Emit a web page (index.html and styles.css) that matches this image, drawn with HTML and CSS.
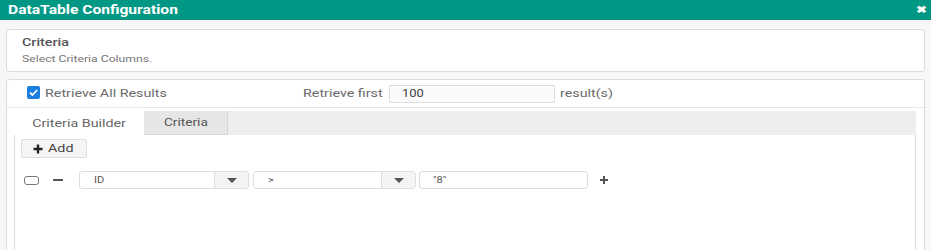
FILE: index.html
```html
<!DOCTYPE html>
<html>
<head>
<meta charset="utf-8">
<link rel="stylesheet" href="styles.css">
</head>
<body>
<div class="dialog">
  <div class="header">
    <span class="t title">DataTable Configuration</span>
    <span class="close">&#10006;</span>
  </div>
  <div class="body">
    <div class="panel info">
      <div class="info-title"><span class="t">Criteria</span></div>
      <div class="info-sub"><span class="t">Select Criteria Columns.</span></div>
    </div>
    <div class="panel main">
      <div class="top-row">
        <label class="chk-label">
          <span class="chk">
            <svg width="13" height="13" viewBox="0 0 13 13"><rect x="0" y="0" width="13" height="13" rx="2" fill="#1a7fe0"/><path d="M3 6.6 L5.4 9 L10.2 4" fill="none" stroke="#fff" stroke-width="1.8"/></svg>
          </span>
          <span class="t">Retrieve All Results</span>
        </label>
        <div class="limit">
          <span class="limit-lbl"><span class="t">Retrieve first</span></span>
          <span class="limit-input"><span class="t">100</span></span>
          <span class="limit-lbl2"><span class="t">result(s)</span></span>
        </div>
      </div>
      <div class="tabs">
        <div class="tab-bar">
          <div class="tab active"><span class="t c">Criteria Builder</span></div>
          <div class="tab other"><span class="t c">Criteria</span></div>
        </div>
        <div class="tab-content">
          <div class="add-btn"><svg width="10" height="10" viewBox="0 0 10 10"><path d="M5 0.5V9.5M0.5 5H9.5" stroke="#222" stroke-width="2.4"/></svg><span class="t">Add</span></div>
          <div class="rule">
            <span class="rule-chk"></span>
            <span class="rule-minus"></span>
            <div class="select s1">
              <span class="sel-text"><span class="t">ID</span></span>
              <span class="sel-btn"><svg width="10" height="5" viewBox="0 0 10 5"><path d="M0 0H10L5 5Z" fill="#555"/></svg></span>
            </div>
            <div class="select s2">
              <span class="sel-text"><span class="t">&gt;</span></span>
              <span class="sel-btn"><svg width="10" height="5" viewBox="0 0 10 5"><path d="M0 0H10L5 5Z" fill="#555"/></svg></span>
            </div>
            <div class="value"><span class="t">"8"</span></div>
            <span class="rule-plus"><svg width="10" height="10" viewBox="0 0 10 10"><path d="M5 1V9M1 5H9" stroke="#555" stroke-width="2"/></svg></span>
          </div>
        </div>
      </div>
    </div>
  </div>
</div>
</body>
</html>
```

FILE: styles.css
```css
* { box-sizing: border-box; }
html, body {
  margin: 0;
  padding: 0;
  background: #f7f7f7;
  font-family: Roboto, "Liberation Sans", Arial, sans-serif;
  overflow: hidden;
  height: 250px;
}
.t {
  display: inline-block;
  transform: scaleX(1.3);
  transform-origin: left center;
  white-space: nowrap;
}
.t.c { transform-origin: center center; }
.header {
  height: 20px;
  background: #009885;
  border-bottom: 1px solid #0f8a79;
  display: flex;
  align-items: center;
  justify-content: space-between;
  padding: 0 6px 0 8px;
}
.title {
  color: #fff;
  font-weight: 700;
  font-size: 12px;
}
.close {
  color: #fff;
  font-size: 10px;
  font-weight: 700;
  transform: scaleX(1.3);
}
.body {
  padding: 9px 6px 0 6px;
  display: flex;
  flex-direction: column;
  gap: 7px;
}
.panel {
  background: #fff;
  border: 1px solid #dcdcdc;
  border-radius: 3px;
}
.info {
  height: 43px;
  padding: 6px 15px;
}
.info-title {
  font-size: 11px;
  font-weight: 500;
  color: #555;
  line-height: 14px;
}
.info-sub {
  margin-top: 3px;
  font-size: 9.4px;
  color: #777;
  line-height: 12px;
}
.main {
  height: 171px;
  border-bottom: none;
  border-radius: 3px 3px 0 0;
}
.top-row {
  height: 28px;
  border-bottom: 1px solid #e8e8e8;
  display: flex;
  align-items: center;
  padding-left: 20px;
}
.chk-label {
  display: flex;
  align-items: center;
  gap: 5px;
  font-size: 11px;
  color: #6a6a6a;
  width: 276px;
}
.chk { display: flex; margin-top: -3px; }
.limit {
  display: flex;
  align-items: center;
  font-size: 11px;
  color: #6a6a6a;
}
.limit-lbl { width: 86px; }
.limit-lbl2 { margin-left: 5px; font-size: 11px; }
.limit-input {
  width: 166px;
  height: 18px;
  border: 1px solid #ddd;
  border-radius: 2px;
  background: #fafafa;
  padding-left: 12px;
  line-height: 16px;
  color: #444;
  font-size: 10px;
}
.tabs {
  margin: 3px 8px 0 7px;
}
.tab-bar {
  height: 24px;
  background: #eee;
  display: flex;
}
.tab {
  font-size: 11px;
  color: #555;
  display: flex;
  align-items: center;
  justify-content: center;
  height: 24px;
}
.tab.active {
  background: #fff;
  width: 130px;
  color: #666;
}
.tab.other {
  width: 84px;
  background: #e6e6e6;
  border: 1px solid #d5d5d5;
  border-top: none;
  border-left: none;
  font-size: 10.5px;
}
.tab-content {
  background: #fff;
  border-left: 1px solid #ddd;
  border-right: 1px solid #ddd;
  height: 120px;
  padding: 4px 6px;
}
.add-btn {
  width: 66px;
  height: 19px;
  background: #f5f5f5;
  border: 1px solid #ddd;
  border-radius: 2px;
  display: flex;
  align-items: center;
  padding-left: 11px;
  gap: 5px;
  font-size: 11px;
  color: #444;
}
.rule {
  margin-top: 13px;
  display: flex;
  align-items: center;
  height: 18px;
}
.rule-chk {
  width: 15px;
  height: 9px;
  border: 1px solid #777;
  border-radius: 3px;
  margin-left: 3px;
}
.rule-minus {
  width: 10px;
  height: 2px;
  background: #555;
  margin-left: 14px;
}
.select {
  display: flex;
  height: 18px;
  border: 1px solid #ddd;
  border-radius: 3px;
  font-size: 8.5px;
  color: #555;
}
.s1 { width: 170px; margin-left: 16px; }
.s2 { width: 163px; margin-left: 4px; }
.sel-text {
  flex: 1;
  padding-left: 14px;
  display: flex;
  align-items: center;
}
.sel-btn {
  width: 34px;
  background: #f4f4f4;
  border-left: 1px solid #ddd;
  display: flex;
  align-items: center;
  justify-content: center;
}
.value {
  width: 169px;
  height: 18px;
  margin-left: 3px;
  border: 1px solid #ddd;
  border-radius: 3px;
  font-size: 8.5px;
  color: #555;
  padding-left: 13px;
  display: flex;
  align-items: center;
}
.rule-plus {
  margin-left: 11px;
  display: flex;
}
```
